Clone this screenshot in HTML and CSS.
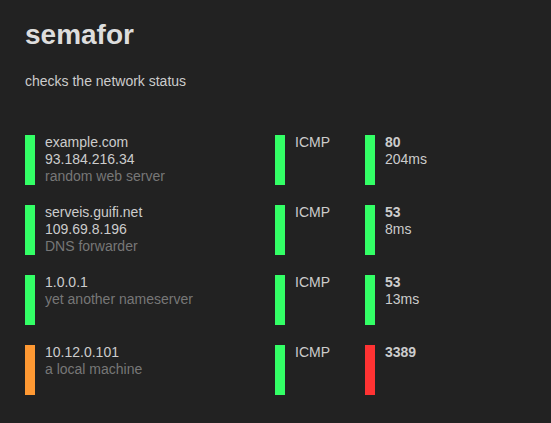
FILE: index.html
```html
<!DOCTYPE html>
<html>
<head>
<meta charset="utf-8">
<link rel="stylesheet" href="styles.css">
</head>
<body>
<div class="page">
  <h1 class="title">semafor</h1>
  <p class="subtitle">checks the network status</p>
  <div class="list">
    <div class="row">
      <div class="cell host">
        <span class="bar ok"></span>
        <div class="text"><div>example.com</div><div>93.184.216.34</div><div class="desc">random web server</div></div>
      </div>
      <div class="cell proto">
        <span class="bar ok"></span>
        <div class="text"><div>ICMP</div></div>
      </div>
      <div class="cell port">
        <span class="bar ok"></span>
        <div class="text"><div class="num">80</div><div>204ms</div></div>
      </div>
    </div>
    <div class="row">
      <div class="cell host">
        <span class="bar ok"></span>
        <div class="text"><div>serveis.guifi.net</div><div>109.69.8.196</div><div class="desc">DNS forwarder</div></div>
      </div>
      <div class="cell proto">
        <span class="bar ok"></span>
        <div class="text"><div>ICMP</div></div>
      </div>
      <div class="cell port">
        <span class="bar ok"></span>
        <div class="text"><div class="num">53</div><div>8ms</div></div>
      </div>
    </div>
    <div class="row">
      <div class="cell host">
        <span class="bar ok"></span>
        <div class="text"><div>1.0.0.1</div><div class="desc">yet another nameserver</div></div>
      </div>
      <div class="cell proto">
        <span class="bar ok"></span>
        <div class="text"><div>ICMP</div></div>
      </div>
      <div class="cell port">
        <span class="bar ok"></span>
        <div class="text"><div class="num">53</div><div>13ms</div></div>
      </div>
    </div>
    <div class="row">
      <div class="cell host">
        <span class="bar warn"></span>
        <div class="text"><div>10.12.0.101</div><div class="desc">a local machine</div></div>
      </div>
      <div class="cell proto">
        <span class="bar ok"></span>
        <div class="text"><div>ICMP</div></div>
      </div>
      <div class="cell port">
        <span class="bar fail"></span>
        <div class="text"><div class="num">3389</div></div>
      </div>
    </div>
  </div>
</div>
</body>
</html>
```
FILE: styles.css
```css
html, body {
  margin: 0;
  padding: 0;
  background: #222222;
}
body {
  font-family: "Liberation Sans", Arial, sans-serif;
  color: #cccccc;
  font-size: 14px;
}
.page {
  padding: 19px 25px;
}
.title {
  margin: 0;
  font-size: 28px;
  line-height: 32px;
  font-weight: bold;
  color: #dddddd;
}
.subtitle {
  margin: 22px 0 0;
  font-size: 14px;
  line-height: 17px;
  color: #cccccc;
}
.list {
  margin-top: 45px;
  display: flex;
  flex-direction: column;
  gap: 20px;
}
.row {
  display: flex;
  height: 50px;
}
.cell {
  display: flex;
  gap: 10px;
}
.host { width: 250px; }
.proto { width: 90px; }
.port { flex: 1; }
.bar {
  width: 10px;
  height: 50px;
  flex: none;
}
.ok { background: #33ff66; }
.warn { background: #ff9933; }
.fail { background: #ff3333; }
.text {
  line-height: 17px;
  margin-top: -1px;
}
.desc { color: #777777; }
.num { font-weight: bold; }
```
